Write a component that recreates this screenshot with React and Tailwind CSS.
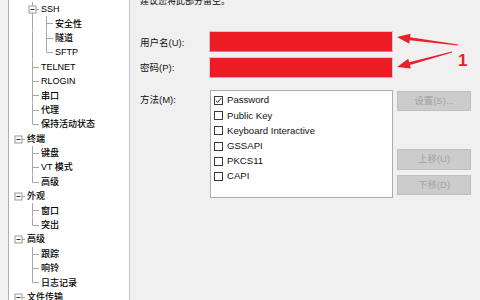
import React from 'react';

const font = "font-['Liberation_Sans','Noto_Sans_CJK_SC',sans-serif]";

// tree rows: cells describes the connector drawing for each column
const treeRows = [
  { label: 'SSH', cells: ['none', 'box-ud'] },
  { label: '安全性', cells: ['none', 'pass', 'T'] },
  { label: '隧道', cells: ['none', 'pass', 'T'] },
  { label: 'SFTP', cells: ['none', 'pass', 'L'] },
  { label: 'TELNET', cells: ['none', 'T'] },
  { label: 'RLOGIN', cells: ['none', 'T'] },
  { label: '串口', cells: ['none', 'T'] },
  { label: '代理', cells: ['none', 'T'] },
  { label: '保持活动状态', cells: ['none', 'L'] },
  { label: '终端', cells: ['box'] },
  { label: '键盘', cells: ['none', 'T'] },
  { label: 'VT 模式', cells: ['none', 'T'] },
  { label: '高级', cells: ['none', 'L'] },
  { label: '外观', cells: ['box'] },
  { label: '窗口', cells: ['none', 'T'] },
  { label: '突出', cells: ['none', 'L'] },
  { label: '高级', cells: ['box'] },
  { label: '跟踪', cells: ['none', 'T'] },
  { label: '响铃', cells: ['none', 'T'] },
  { label: '日志记录', cells: ['none', 'L'] },
  { label: '文件传输', cells: ['box'] },
];

const methods = [
  { label: 'Password', checked: true },
  { label: 'Public Key' },
  { label: 'Keyboard Interactive' },
  { label: 'GSSAPI' },
  { label: 'PKCS11' },
  { label: 'CAPI' },
];

const Connector = ({ type }) => {
  const line = '#a6a6a6';
  return (
    <svg width="14" height="14.4" viewBox="0 0 14 14.4" className="shrink-0">
      {(type === 'pass' || type === 'T') && <line x1="7.5" y1="0" x2="7.5" y2="14.4" stroke={line} />}
      {type === 'L' && <line x1="7.5" y1="0" x2="7.5" y2="7.5" stroke={line} />}
      {(type === 'T' || type === 'L') && <line x1="7.5" y1="7.5" x2="14" y2="7.5" stroke={line} />}
      {type.startsWith('box') && (
        <>
          {type === 'box-ud' && (
            <>
              <line x1="7.5" y1="0" x2="7.5" y2="4" stroke={line} />
              <line x1="7.5" y1="11" x2="7.5" y2="14.4" stroke={line} />
            </>
          )}
          <rect x="4" y="4" width="7" height="7" fill="#fff" stroke="#9a9a9a" />
          <line x1="5.5" y1="7.5" x2="9.5" y2="7.5" stroke="#333" />
          <line x1="11" y1="7.5" x2="14" y2="7.5" stroke={line} />
        </>
      )}
    </svg>
  );
};

const TreeRow = ({ row }) => (
  <div className="flex items-center h-[14.4px]">
    {row.cells.map((c, i) => (
      <Connector key={i} type={c} />
    ))}
    <span className="ml-[2px] text-[9px] leading-[14px] text-black font-medium whitespace-nowrap">{row.label}</span>
  </div>
);

const Checkbox = ({ checked }) => (
  <div className="w-[9px] h-[9px] border border-[#3a3a3a] bg-white flex items-center justify-center shrink-0">
    {checked && (
      <svg width="7" height="7" viewBox="0 0 7 7">
        <path d="M0.8 3.6 L2.7 5.4 L6.2 1.2" fill="none" stroke="#222" strokeWidth="1" />
      </svg>
    )}
  </div>
);

const DisabledButton = ({ children, className = '' }) => (
  <div
    className={`w-[74px] flex items-center justify-center bg-[#cccccc] border border-[#bfbfbf] text-[9.5px] text-[#a2a2a2] ${className}`}
  >
    {children}
  </div>
);

export default function App() {
  return (
    <div className={`w-[480px] h-[300px] overflow-hidden flex bg-[#f0f0f0] ${font}`}>
      {/* category tree */}
      <div className="ml-[8px] w-[122px] h-full bg-white border-l border-r border-l-[#b0b0b0] border-r-[#c4c4c4] pt-[2px] pl-[2px] overflow-hidden">
        {treeRows.map((r, i) => (
          <TreeRow key={i} row={r} />
        ))}
      </div>

      {/* settings pane */}
      <div className="relative flex-1 pl-[10px] text-[9.5px] text-[#111]">
        <div className="-mt-[6px] h-[14px] leading-[14px] text-[9px]">建议您将此部分留空。</div>

        <div className="mt-[23px] flex items-center">
          <div className="w-[69px] pt-[3px]">用户名(U):</div>
          <div className="w-[184px] h-[21px] bg-[#ed1c24] border border-[#c9c9c9] border-b-[#9a9a9a]" />
        </div>
        <div className="mt-[5px] flex items-center">
          <div className="w-[69px] pt-[1px]">密码(P):</div>
          <div className="w-[184px] h-[21px] bg-[#ed1c24] border border-[#d0d0d0] border-b-[#b0b0b0]" />
        </div>

        <div className="mt-[12px] flex items-start">
          <div className="w-[70px] pt-[3px] leading-[14px]">方法(M):</div>
          <div className="w-[183px] h-[108px] bg-white border border-[#acacac] pt-[2px] pl-[3px]">
            {methods.map((m) => (
              <div key={m.label} className="h-[15.2px] flex items-center gap-[4px] text-[9.6px] text-[#111]">
                <Checkbox checked={m.checked} />
                <span>{m.label}</span>
              </div>
            ))}
          </div>
          <div className="ml-[4px] pt-[1px] flex flex-col">
            <DisabledButton className="h-[20px]">设置(S)...</DisabledButton>
            <DisabledButton className="h-[21px] mt-[38px]">上移(U)</DisabledButton>
            <DisabledButton className="h-[20px] mt-[5px]">下移(D)</DisabledButton>
          </div>
        </div>

        {/* annotation arrows */}
        <svg className="absolute left-[-130px] top-0 pointer-events-none" width="480" height="300" viewBox="0 0 480 300">
          <polygon
            fill="#e8202a"
            points="397,37 410.55,33.74 410.1,37.2 458.07,44.5 457.93,45.5 409.7,40.2 409.25,43.66"
          />
          <polygon
            fill="#e8202a"
            points="397,67 408.24,58.76 409.16,62.13 451.87,51.52 452.13,52.48 409.94,65.03 410.87,68.4"
          />
        </svg>
        <div className="absolute left-[328px] top-[51px] text-[17px] leading-[20px] font-bold text-[#e8202a] font-['Liberation_Sans',sans-serif]">
          1
        </div>
      </div>
    </div>
  );
}
